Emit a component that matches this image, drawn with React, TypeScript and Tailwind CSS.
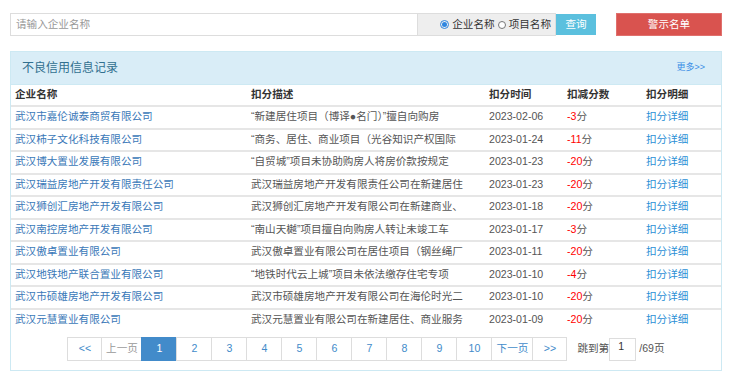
import React from 'react';

type Row = { name: string; desc: string; date: string; score: string };

const rows: Row[] = [
  { name: '武汉市嘉伦诚泰商贸有限公司', desc: '“新建居住项目（博译●名门）”擅自向购房', date: '2023-02-06', score: '-3' },
  { name: '武汉柿子文化科技有限公司', desc: '“商务、居住、商业项目（光谷知识产权国际', date: '2023-01-24', score: '-11' },
  { name: '武汉博大置业发展有限公司', desc: '“自贸城”项目未协助购房人将房价款按规定', date: '2023-01-23', score: '-20' },
  { name: '武汉瑞益房地产开发有限责任公司', desc: '武汉瑞益房地产开发有限责任公司在新建居住', date: '2023-01-23', score: '-20' },
  { name: '武汉狮创汇房地产开发有限公司', desc: '武汉狮创汇房地产开发有限公司在新建商业、', date: '2023-01-18', score: '-20' },
  { name: '武汉南控房地产开发有限公司', desc: '“南山天樾”项目擅自向购房人转让未竣工车', date: '2023-01-17', score: '-3' },
  { name: '武汉傲卓置业有限公司', desc: '武汉傲卓置业有限公司在居住项目（钢丝绳厂', date: '2023-01-11', score: '-20' },
  { name: '武汉地铁地产联合置业有限公司', desc: '“地铁时代云上城”项目未依法缴存住宅专项', date: '2023-01-10', score: '-4' },
  { name: '武汉市硕雄房地产开发有限公司', desc: '武汉市硕雄房地产开发有限公司在海伦时光二', date: '2023-01-10', score: '-20' },
  { name: '武汉元慧置业有限公司', desc: '武汉元慧置业有限公司在新建居住、商业服务', date: '2023-01-09', score: '-20' },
];

const pages = ['1', '2', '3', '4', '5', '6', '7', '8', '9', '10'];

const App: React.FC = () => {
  return (
    <div className="w-[740px] h-[373px] bg-white font-['Liberation_Sans','Noto_Sans_CJK_SC',sans-serif] text-[10.6px] text-[#555] overflow-hidden">
      <div className="ml-[10px] w-[712px] pt-[13px]">
        {/* search bar */}
        <div className="flex h-[23px]">
          <div className="w-[408px] border border-[#ddd] flex items-center pl-[5px] text-[#999]">请输入企业名称</div>
          <div className="w-[138px] border border-l-0 border-[#ddd] bg-[#eee] flex items-center justify-end pr-[4px] text-[#333]">
            <span className="w-[9px] h-[9px] rounded-full border border-[#2f86e0] flex items-center justify-center mr-[3px]">
              <span className="w-[5px] h-[5px] rounded-full bg-[#2f86e0]" />
            </span>
            <span>企业名称</span>
            <span className="w-[8px] h-[8px] rounded-full border border-[#777] bg-white ml-[3px] mr-[3px]" />
            <span>项目名称</span>
          </div>
          <div className="w-[40px] my-[1px] bg-[#5bc0de] text-white flex items-center justify-center">查询</div>
          <div className="w-[106px] ml-[20px] bg-[#d9534f] border border-[#e0706d] text-white flex items-center justify-center">警示名单</div>
        </div>

        {/* panel */}
        <div className="mt-[15px] border border-[#cde9f3] h-[320px]">
          <div className="h-[33px] bg-[#d9edf7] border-b border-[#cde9f3] flex items-center justify-between pl-[11px] pr-[16px]">
            <span className="text-[12px] text-[#31708f]">不良信用信息记录</span>
            <span className="text-[9px] text-[#3a8ee6]">更多&gt;&gt;</span>
          </div>
          <table className="w-full table-fixed border-collapse">
            <colgroup>
              <col className="w-[236px]" />
              <col className="w-[238px]" />
              <col className="w-[78px]" />
              <col className="w-[79px]" />
              <col />
            </colgroup>
            <thead>
              <tr className="h-[21px] text-[#333] font-bold text-left">
                <th className="pl-[4px] font-bold">企业名称</th>
                <th className="pl-[4px] font-bold">扣分描述</th>
                <th className="pl-[4px] font-bold">扣分时间</th>
                <th className="pl-[4px] font-bold">扣减分数</th>
                <th className="pl-[4px] font-bold">扣分明细</th>
              </tr>
            </thead>
            <tbody>
              {rows.map((r) => (
                <tr key={r.name + r.date} className="h-[22.5px] border-t-2 border-[#e6e6e6]">
                  <td className="pl-[4px] text-[#3a78b8] whitespace-nowrap overflow-hidden">{r.name}</td>
                  <td className="pl-[4px] whitespace-nowrap overflow-hidden">{r.desc}</td>
                  <td className="pl-[4px]">{r.date}</td>
                  <td className="pl-[4px]">
                    <span className="text-[#f00]">{r.score}</span>分
                  </td>
                  <td className="pl-[4px] text-[#2a8fd6]">扣分详细</td>
                </tr>
              ))}
            </tbody>
          </table>

          {/* pagination */}
          <div className="mt-[6px] flex items-center justify-center">
            <div className="flex h-[24px]">
              <span className="w-[35px] border border-[#ddd] flex items-center justify-center text-[#428bca]">&lt;&lt;</span>
              <span className="w-[41px] -ml-px border border-[#ddd] flex items-center justify-center text-[#999]">上一页</span>
              {pages.map((p) => (
                <span
                  key={p}
                  className={
                    p === '1'
                      ? 'w-[36px] -ml-px border border-[#428bca] bg-[#428bca] text-white flex items-center justify-center'
                      : 'w-[36px] -ml-px border border-[#ddd] text-[#428bca] flex items-center justify-center'
                  }
                >
                  {p}
                </span>
              ))}
              <span className="w-[42px] -ml-px border border-[#ddd] flex items-center justify-center text-[#428bca]">下一页</span>
              <span className="w-[35px] -ml-px border border-[#ddd] flex items-center justify-center text-[#428bca]">&gt;&gt;</span>
            </div>
            <span className="ml-[10px]">跳到第</span>
            <span className="w-[27px] h-[23px] border border-[#ddd] pl-[8px] leading-[14px] text-[#333]">1</span>
            <span className="ml-[3px]">/69页</span>
          </div>
        </div>
      </div>
    </div>
  );
};

export default App;
